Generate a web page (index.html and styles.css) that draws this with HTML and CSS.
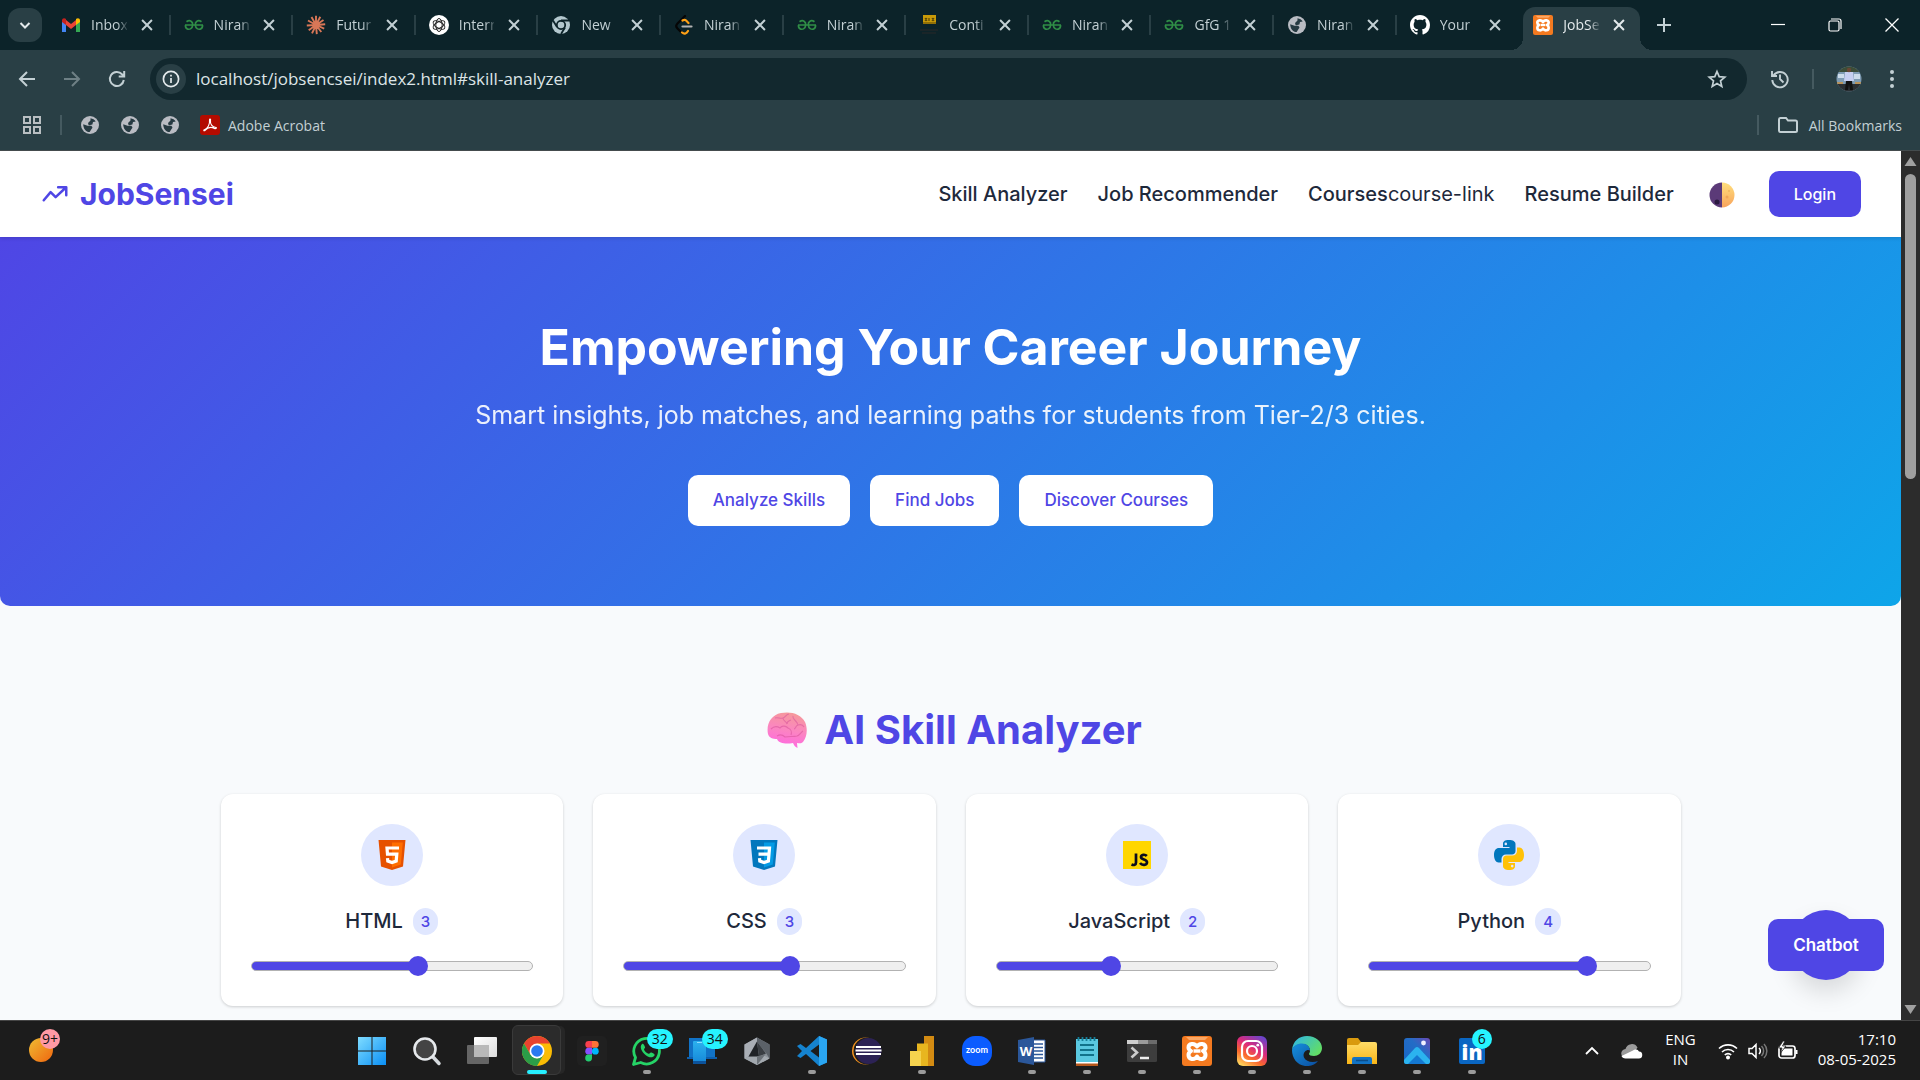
FILE: index.html
```html
<!DOCTYPE html>
<html lang="en">
<head>
<meta charset="utf-8">
<meta name="viewport" content="width=device-width, initial-scale=1">
<title>JobSensei</title>
<link rel="stylesheet" href="styles.css">
</head>
<body>
<svg class="sprite" aria-hidden="true">
  <defs>
    <linearGradient id="g-win" x1="0" y1="0" x2="1" y2="1"><stop offset="0" stop-color="#7fdcff"/><stop offset="1" stop-color="#0a8ff5"/></linearGradient>
    <linearGradient id="g-orange" x1="0" y1="0" x2="1" y2="1"><stop offset="0" stop-color="#eebc33"/><stop offset="1" stop-color="#f0660f"/></linearGradient>
    <linearGradient id="g-white" x1="0" y1="0" x2="1" y2="1"><stop offset="0" stop-color="#fff"/><stop offset="1" stop-color="#dcdcdc"/></linearGradient>
    <linearGradient id="g-phone" x1="0" y1="0" x2="0" y2="1"><stop offset="0" stop-color="#2cb2ee"/><stop offset="1" stop-color="#1586d8"/></linearGradient>
    <linearGradient id="g-insta" x1="0.2" y1="1" x2="0.8" y2="0"><stop offset="0" stop-color="#ffd45c"/><stop offset="0.3" stop-color="#fb6a2c"/><stop offset="0.6" stop-color="#dd2a7b"/><stop offset="1" stop-color="#6a45cc"/></linearGradient>
    <linearGradient id="g-edge" x1="0" y1="0" x2="1" y2="0.6"><stop offset="0" stop-color="#2bb4ee"/><stop offset="1" stop-color="#62dd66"/></linearGradient>
    <linearGradient id="g-edge2" x1="0" y1="0" x2="1" y2="1"><stop offset="0" stop-color="#1690dc"/><stop offset="1" stop-color="#0b4da0"/></linearGradient>
    <linearGradient id="g-folder" x1="0" y1="0" x2="0" y2="1"><stop offset="0" stop-color="#ffdc68"/><stop offset="1" stop-color="#f9b517"/></linearGradient>
    <linearGradient id="g-photos" x1="0" y1="1" x2="1" y2="0"><stop offset="0" stop-color="#1666c5"/><stop offset="0.6" stop-color="#246cc6"/><stop offset="1" stop-color="#6b49b5"/></linearGradient>
    <linearGradient id="g-brain" x1="0.7" y1="0" x2="0.5" y2="1"><stop offset="0" stop-color="#f59a98"/><stop offset="0.5" stop-color="#fb86c0"/><stop offset="1" stop-color="#ff68e2"/></linearGradient>
    <linearGradient id="g-moon" x1="0" y1="0" x2="0" y2="1"><stop offset="0" stop-color="#ffdf7c"/><stop offset="1" stop-color="#f8a35c"/></linearGradient>
    <symbol id="i-close" viewBox="0 0 12 12"><path d="M2.300 2.300l7.400 7.400M9.700 2.300l-7.400 7.400" fill="none" stroke="currentColor" stroke-width="1.500"/></symbol>
    <symbol id="i-gfg" viewBox="0 0 20 20"><g fill="none" stroke="#2f8d46" stroke-width="1.700"><path d="M1 10h18M2.500 6.800C6 4.300 9 6.500 8.700 10c-.3 3.600-3 4.600-5 4.100C1.800 13.600 1.300 12 1.500 10M17.500 6.800C14 4.300 11 6.500 11.300 10c.3 3.600 3 4.600 5 4.100 1.900-.5 2.400-2.100 2.200-4.100"/></g></symbol>
    <symbol id="i-globe" viewBox="0 0 20 20"><circle cx="10" cy="10" r="9" fill="#b9bcc3"/><path d="M10.500 3.200c2.300.3 4 1.500 5.200 3.400l-2.700.4-.6 2.600-3.300.6c-1.400-.8-1.200-2.300-.2-3.200 1-.8 1.800-.6 1.600-3.800zM3.200 9.200l4.300 1.500 3.700.1c1.800 1.200 1.400 2.400.3 3.200l-1.800 3.100c-3.700.1-6.400-3.500-6.500-7.900z" fill="#263a42"/></symbol>
    <symbol id="i-xampp" viewBox="0 0 30 30"><rect width="30" height="30" rx="3" fill="#f47a20"/><path d="M4 1h22l-3 3H7z" fill="#fba866"/><path d="M15 10.500C12.500 6.500 6.500 7.500 6.500 11.500c0 2 1.500 3 2.500 3.500-1 .5-2.500 1.500-2.500 4 0 4.500 6 5.500 8.500 1.500 2.500 4 8.500 3 8.500-1.500 0-2.500-1.500-3.500-2.500-4 1-.5 2.500-1.500 2.500-3.500 0-4-6-5-8.500-1z" fill="none" stroke="#fff" stroke-width="4" stroke-linejoin="round"/><path d="M11.500 15h7" stroke="#fff" stroke-width="3.500"/></symbol>
  </defs>
</svg>

<div class="screen">
  <header class="browser">
    <div class="tabstrip">
      <button class="tab-search" aria-label="Search tabs"><svg width="14" height="14" viewBox="0 0 14 14"><path d="M2.500 5l4.500 4.500L11.500 5" fill="none" stroke="currentColor" stroke-width="2"/></svg></button>
      <div class="tabs">
        <div class="tab"><svg class="favicon" viewBox="0 0 20 20"><path d="M1 5v12h4V9z" fill="#4285f4"/><path d="M19 5v12h-4V9z" fill="#34a853"/><path d="M5 5l5 4 5-4v5l-5 4-5-4z" fill="#ea4335"/><path d="M1 5.500C1 3 3.500 2.500 5 4v6L1 7z" fill="#c5221f"/><path d="M19 5.500C19 3 16.500 2.500 15 4v6l4-3z" fill="#fbbc04"/></svg><span class="tab-title">Inbox</span><button class="tab-close" aria-label="Close tab"><svg><use href="#i-close"/></svg></button></div>
        <div class="tab"><svg class="favicon"><use href="#i-gfg"/></svg><span class="tab-title">Niran</span><button class="tab-close" aria-label="Close tab"><svg><use href="#i-close"/></svg></button></div>
        <div class="tab"><svg class="favicon" viewBox="0 0 20 20"><path d="M10 10V.8M10 10l4.300-8.200M10 10l7.500-5M10 10l9.200-.8M10 10l8.200 3.700M10 10l5.300 7M10 10l.8 9.200M10 10l-4 8.300M10 10l-7.300 5.200M10 10L.8 10.500M10 10L2 5.500M10 10L5.500 2" stroke="#d97757" stroke-width="1.900"/></svg><span class="tab-title">Futur</span><button class="tab-close" aria-label="Close tab"><svg><use href="#i-close"/></svg></button></div>
        <div class="tab"><svg class="favicon" viewBox="0 0 20 20"><circle cx="10" cy="10" r="10" fill="#fff"/><g fill="none" stroke="#222" stroke-width="1"><ellipse cx="10" cy="10" rx="3.200" ry="6.500"/><ellipse cx="10" cy="10" rx="3.200" ry="6.500" transform="rotate(60 10 10)"/><ellipse cx="10" cy="10" rx="3.200" ry="6.500" transform="rotate(120 10 10)"/></g></svg><span class="tab-title">Intern</span><button class="tab-close" aria-label="Close tab"><svg><use href="#i-close"/></svg></button></div>
        <div class="tab"><svg class="favicon" viewBox="0 0 20 20"><circle cx="10" cy="10" r="9" fill="#b4c8ce"/><circle cx="10" cy="10" r="4.200" fill="none" stroke="#0d2329" stroke-width="1.800"/><path d="M10 5.500h8M6 12L2 5.500M14 12.500L10 19" stroke="#0d2329" stroke-width="1.800"/></svg><span class="tab-title">New</span><button class="tab-close" aria-label="Close tab"><svg><use href="#i-close"/></svg></button></div>
        <div class="tab"><svg class="favicon" viewBox="0 0 20 20"><path d="M11 1L3.500 8.500c-1.500 1.500-1.500 3.500 0 5L8 18" fill="none" stroke="#050505" stroke-width="2.200" stroke-linecap="round"/><path d="M8.500 5.500C11 4 12 5.500 14.500 8M8 17.500c2.500 2 4.500 1 6-1.500" fill="none" stroke="#ffa116" stroke-width="2.200" stroke-linecap="round"/><path d="M8.500 11.500h9" stroke="#b3b3b3" stroke-width="2.200" stroke-linecap="round"/></svg><span class="tab-title">Niran</span><button class="tab-close" aria-label="Close tab"><svg><use href="#i-close"/></svg></button></div>
        <div class="tab"><svg class="favicon"><use href="#i-gfg"/></svg><span class="tab-title">Niran</span><button class="tab-close" aria-label="Close tab"><svg><use href="#i-close"/></svg></button></div>
        <div class="tab"><svg class="favicon" viewBox="0 0 20 20"><rect x="4" y="0" width="13" height="9" fill="#c99a08"/><path d="M6 3l2 3m0-3L6 6m4-3v3m3-3l2 3m0-3l-2 3M4 8h13" stroke="#5a4706" stroke-width="1.200"/><path d="M1 15h18M3 18h14" stroke="#1a2528" stroke-width="2"/></svg><span class="tab-title">Conti</span><button class="tab-close" aria-label="Close tab"><svg><use href="#i-close"/></svg></button></div>
        <div class="tab"><svg class="favicon"><use href="#i-gfg"/></svg><span class="tab-title">Niran</span><button class="tab-close" aria-label="Close tab"><svg><use href="#i-close"/></svg></button></div>
        <div class="tab"><svg class="favicon"><use href="#i-gfg"/></svg><span class="tab-title">GfG 1</span><button class="tab-close" aria-label="Close tab"><svg><use href="#i-close"/></svg></button></div>
        <div class="tab"><svg class="favicon"><use href="#i-globe"/></svg><span class="tab-title">Niran</span><button class="tab-close" aria-label="Close tab"><svg><use href="#i-close"/></svg></button></div>
        <div class="tab"><svg class="favicon" viewBox="0 0 16 16"><path fill="#fff" d="M8 0C3.580 0 0 3.580 0 8c0 3.540 2.290 6.530 5.470 7.590.4.070.55-.17.55-.38 0-.19-.01-.82-.01-1.490-2.010.37-2.530-.49-2.690-.94-.09-.23-.48-.94-.82-1.130-.28-.15-.68-.52-.01-.53.63-.01 1.080.58 1.230.82.72 1.210 1.870.87 2.330.66.07-.52.28-.87.51-1.070-1.780-.2-3.640-.89-3.640-3.950 0-.87.31-1.590.82-2.150-.08-.2-.36-1.020.08-2.120 0 0 .67-.21 2.200.82.64-.18 1.320-.27 2-.27s1.360.09 2 .27c1.530-1.040 2.200-.82 2.200-.82.44 1.100.16 1.920.08 2.120.51.56.82 1.270.82 2.150 0 3.070-1.870 3.750-3.650 3.950.29.25.54.73.54 1.480 0 1.070-.01 1.930-.01 2.200 0 .21.15.46.55.38A8.010 8.010 0 0016 8c0-4.420-3.580-8-8-8z"/></svg><span class="tab-title">Your</span><button class="tab-close" aria-label="Close tab"><svg><use href="#i-close"/></svg></button></div>
        <div class="tab tab-active"><svg class="favicon"><use href="#i-xampp"/></svg><span class="tab-title">JobSe</span><button class="tab-close" aria-label="Close tab"><svg><use href="#i-close"/></svg></button></div>
      </div>
      <button class="new-tab" aria-label="New tab"><svg width="14" height="14" viewBox="0 0 14 14"><path d="M7 0v14M0 7h14" stroke="currentColor" stroke-width="2"/></svg></button>
      <div class="window-controls">
        <button aria-label="Minimize"><svg width="14" height="14" viewBox="0 0 14 14"><path d="M0 6.500h14" stroke="currentColor" stroke-width="1.200"/></svg></button>
        <button aria-label="Restore"><svg width="14" height="14" viewBox="0 0 14 14" fill="none" stroke="currentColor" stroke-width="1.200"><rect x="1" y="3" width="10" height="10" rx="1.500"/><path d="M3 1h8a2 2 0 012 2v8"/></svg></button>
        <button aria-label="Close"><svg width="14" height="14" viewBox="0 0 14 14"><path d="M.5.5l13 13M13.500.5l-13 13" stroke="currentColor" stroke-width="1.300"/></svg></button>
      </div>
    </div>
    <div class="toolbar">
      <div class="nav-buttons">
        <button aria-label="Back"><svg width="20" height="20" viewBox="0 0 20 20"><path d="M18 10H3M10 3l-7 7 7 7" fill="none" stroke="currentColor" stroke-width="2"/></svg></button>
        <button class="dim" aria-label="Forward"><svg width="20" height="20" viewBox="0 0 20 20"><path d="M2 10h15M10 3l7 7-7 7" fill="none" stroke="currentColor" stroke-width="2"/></svg></button>
        <button aria-label="Reload"><svg width="20" height="20" viewBox="0 0 20 20"><path d="M16.800 11A7 7 0 1115 5.200L17 7M17.200 2v5.500h-5.500" fill="none" stroke="currentColor" stroke-width="2"/></svg></button>
      </div>
      <div class="address">
        <span class="site-info"><svg width="18" height="18" viewBox="0 0 18 18"><circle cx="9" cy="9" r="7.600" fill="none" stroke="#e4eaec" stroke-width="1.700"/><path d="M9 8v5M9 4.800v1.800" stroke="#e4eaec" stroke-width="1.700"/></svg></span>
        <input type="text" aria-label="Address" value="localhost/jobsencsei/index2.html#skill-analyzer">
        <button aria-label="Bookmark this page"><svg width="20" height="20" viewBox="0 0 20 20"><path d="M10 2.500l2.200 5.200 5.600.5-4.300 3.700 1.300 5.500L10 14.500l-4.800 2.900 1.300-5.500-4.300-3.700 5.600-.5z" fill="none" stroke="currentColor" stroke-width="1.700"/></svg></button>
      </div>
      <div class="toolbar-end">
        <button aria-label="History"><svg width="20" height="20" viewBox="0 0 20 20" fill="none" stroke="currentColor" stroke-width="1.900"><path d="M3.500 6.500A7.700 7.700 0 112.300 11M2 2v5h5M10 5.500V10l3.500 3.500"/></svg></button>
        <span class="bar"></span>
        <button class="avatar" aria-label="Profile"><svg width="26" height="26" viewBox="0 0 26 26"><clipPath id="c-av"><circle cx="13" cy="13" r="12.500"/></clipPath><g clip-path="url(#c-av)"><path fill="#7f9cb3" d="M0 0h26v26H0z"/><path fill="#3c4d38" d="M0 0h26v6H0z"/><path fill="#cddcea" d="M2 8h6v4H2zM18 8h6v5h-6z"/><path fill="#2a2f33" d="M0 18h26v8H0z"/><path fill="#b8935b" d="M1 16h6v2H1zM19 16h6v2h-6z"/><path fill="#c7cff0" d="M9 6h8l1 9H8z"/><path fill="#111" d="M10 15h6l1 9h-3l-1-6-1 6H9z"/><circle cx="13" cy="4" r="2.200" fill="#6b4634"/></g></svg></button>
        <button aria-label="Menu"><svg width="6" height="22" viewBox="0 0 6 22" fill="currentColor"><circle cx="3" cy="4" r="2"/><circle cx="3" cy="11" r="2"/><circle cx="3" cy="18" r="2"/></svg></button>
      </div>
    </div>
    <nav class="bookmarks" aria-label="Bookmarks">
      <a class="apps" href="#apps" aria-label="Apps"><svg width="20" height="20" viewBox="0 0 20 20" fill="none" stroke="#b9bfc2" stroke-width="2"><path d="M2 2h6v6H2zM12 2h6v6h-6zM2 12h6v6H2zM12 12h6v6h-6z"/></svg></a>
      <span class="bar"></span>
      <a href="#b1" aria-label="Bookmark"><svg class="icon-20"><use href="#i-globe"/></svg></a>
      <a href="#b2" aria-label="Bookmark"><svg class="icon-20"><use href="#i-globe"/></svg></a>
      <a href="#b3" aria-label="Bookmark"><svg class="icon-20"><use href="#i-globe"/></svg></a>
      <a href="#acrobat"><svg class="icon-20" viewBox="0 0 20 20"><rect width="20" height="20" rx="3" fill="#b30b00"/><path d="M4 15c4-1.500 6-6 5.500-10 0-1.500 1.500-1 1 .5C10 9 12 12 16 12.500c1 .5 0 1.500-1.500 1C11 11.500 7.500 12.500 5 15.500c-1 .7-1.500 0-1-.5z" fill="none" stroke="#fff" stroke-width="1.100"/></svg>Adobe Acrobat</a>
      <span class="bar bar-end"></span>
      <a class="all" href="#all"><svg width="22" height="20" viewBox="0 0 22 20"><path d="M2 4.500A1.500 1.500 0 013.500 3H9l2 2.500h7.500A1.500 1.500 0 0120 7v8.500a1.500 1.500 0 01-1.500 1.500h-15A1.500 1.500 0 012 15.500z" fill="none" stroke="currentColor" stroke-width="2"/></svg>All Bookmarks</a>
    </nav>
  </header>

  <div class="viewport">
    <div class="page">
      <header class="site-header">
        <a class="brand" href="#home"><svg width="30" height="30" viewBox="0 0 24 24" fill="none" stroke="currentColor" stroke-width="2" stroke-linecap="round" stroke-linejoin="round"><path d="M3 17l5.500-6.500 4 4L20.500 7M14.500 6.500H21V13"/></svg>JobSensei</a>
        <nav class="site-nav" aria-label="Main">
          <a href="#skill-analyzer">Skill Analyzer</a>
          <a href="#jobs">Job Recommender</a>
          <span><a href="#courses">Courses</a>course-link</span>
          <a href="#resume">Resume Builder</a>
          <button class="theme" aria-label="Toggle theme"><svg width="26" height="26" viewBox="0 0 26 26"><path d="M13 .5a12.500 12.500 0 000 25z" fill="#5b3a78"/><path d="M13 .5a12.500 12.500 0 010 25z" fill="url(#g-moon)"/><circle cx="8" cy="20" r="2.500" fill="#2b1a40"/><circle cx="18" cy="15" r="1.500" fill="#efa657"/><circle cx="20" cy="9" r="1" fill="#efb55c"/></svg></button>
          <button class="btn btn-primary">Login</button>
        </nav>
      </header>

      <section class="hero">
        <h1>Empowering Your Career Journey</h1>
        <p>Smart insights, job matches, and learning paths for students from Tier-2/3 cities.</p>
        <div class="hero-actions">
          <button class="btn">Analyze Skills</button>
          <button class="btn">Find Jobs</button>
          <button class="btn">Discover Courses</button>
        </div>
      </section>

      <section class="analyzer" id="skill-analyzer">
        <h2><svg width="40" height="36" viewBox="0 0 40 36"><path d="M1 22C-1 12 4 3 14 1c10-2 20 1 24 9 3 7 2 15-2 20-2 2-4 1-6 1l.5 5C28 35 27 33 26 31c-6 1-14 1-16-4-4 0-8-1-9-5z" fill="url(#g-brain)"/><path d="M8 6c3-1 5 1 8 0s3-4 6-4M16 6c0 3 3 3 4 6M4 17c3-3 6-3 9-1 2-3 6-2 8 0 3 1 4 4 3 7M26 4c-1 4 4 4 5 9 3-1 5 0 6 2M31 13c-3 1-2 4-4 4M10 24c3-2 6-1 8 1 4-1 8 0 12-1 3-1 4-4 6-5M24 8c-2 1-4 1-4 4" fill="none" stroke="#d9579d" stroke-opacity=".6" stroke-width="1.100"/></svg>AI Skill Analyzer</h2>
        <div class="cards">
          <article class="card">
            <span class="disc"><svg width="30" height="30" viewBox="0 0 30 30"><path d="M1.500 0h27l-2.500 26.500L15 30 4 26.500z" fill="#e65100"/><path d="M15 2.500h10.800L23.800 24.500 15 27.500z" fill="#ff6d00"/><path d="M22 8H10l.5 6.200h9.300l-.6 6.800-4.200 1.500-4.200-1.500-.3-2.800" fill="none" stroke="#fff" stroke-width="3.200"/></svg></span>
            <div class="skill"><label for="s-html">HTML</label><span class="level">3</span></div>
            <input id="s-html" type="range" min="0" max="5" value="3" style="--fill: 0.6">
          </article>
          <article class="card">
            <span class="disc"><svg width="30" height="30" viewBox="0 0 30 30"><path d="M1.500 0h27l-2.500 26.500L15 30 4 26.500z" fill="#0277bd"/><path d="M15 2.500h10.800L23.800 24.500 15 27.500z" fill="#039be5"/><path d="M8 8h12.500l-.5 6.200H9.500M20 14.200l-.6 6.800-4.400 1.500-4.200-1.500-.3-2.800" fill="none" stroke="#fff" stroke-width="3.200"/></svg></span>
            <div class="skill"><label for="s-css">CSS</label><span class="level">3</span></div>
            <input id="s-css" type="range" min="0" max="5" value="3" style="--fill: 0.6">
          </article>
          <article class="card">
            <span class="disc"><svg width="30" height="30" viewBox="0 0 30 30"><path d="M1 1h28v28H1z" fill="#ffd600"/><path d="M14 13.500v9c0 2.500-2 3-4.500 2M24.800 16c-1.800-2-5.800-1.500-5.800 1 0 3 6 2 6 5.200 0 3.300-5 3.500-7 .8" fill="none" stroke="#0b0b1e" stroke-width="2.700"/></svg></span>
            <div class="skill"><label for="s-js">JavaScript</label><span class="level">2</span></div>
            <input id="s-js" type="range" min="0" max="5" value="2" style="--fill: 0.4">
          </article>
          <article class="card">
            <span class="disc"><svg width="30" height="30" viewBox="0 0 30 30"><path d="M15 0c-4.500 0-6 1.500-6 4v3h6.500v1H5C2 8 0 10.500 0 15s2 7.500 4.500 7.500H7.500V19c0-2.500 2-4.500 4.500-4.500h6c2 0 3.500-1.500 3.500-3.500V4c0-2.500-2.500-4-6.500-4z" fill="#0277bd"/><circle cx="11.800" cy="3.900" r="1.300" fill="#e0e7ff"/><path d="M15 30c4.500 0 6-1.500 6-4v-3h-6.500v-1H25c3 0 5-2.500 5-7s-2-7.500-4.500-7.500H23V11c0 2.500-2 4.500-4.500 4.500h-6c-2 0-3.500 1.500-3.500 3.500v7c0 2.500 2.500 4 6 4z" fill="#ffc107"/><circle cx="18.200" cy="26.100" r="1.300" fill="#e0e7ff"/></svg></span>
            <div class="skill"><label for="s-py">Python</label><span class="level">4</span></div>
            <input id="s-py" type="range" min="0" max="5" value="4" style="--fill: 0.8">
          </article>
        </div>
      </section>
      <div class="chat"><button class="btn btn-primary">Chatbot</button></div>
    </div>
    <div class="scrollbar" aria-hidden="true">
      <svg width="13" height="11" viewBox="0 0 13 11"><path d="M6.500 1L12.500 10H.5z" fill="#a0a0a0"/></svg>
      <div class="scroll-track"><div class="scroll-thumb"></div></div>
      <svg width="13" height="11" viewBox="0 0 13 11"><path d="M6.500 10L12.500 1H.5z" fill="#a0a0a0"/></svg>
    </div>
  </div>

  <footer class="taskbar">
    <div class="widgets"><span class="weather"><svg width="24" height="24" viewBox="0 0 24 24"><circle cx="12" cy="12" r="12" fill="url(#g-orange)"/></svg><span class="badge badge-pink">9+</span></span></div>
    <div class="apps-row">
      <button class="app" aria-label="Start"><svg viewBox="0 0 30 30"><path d="M1 1h13.500v13.500H1zM15.500 1H29v13.500H15.500zM1 15.500h13.500V29H1zM15.500 15.500H29V29H15.500z" fill="url(#g-win)"/></svg></button>
      <button class="app" aria-label="Search"><svg viewBox="0 0 30 30"><path d="M21 21l6 6.500" stroke="#d5d9dd" stroke-width="3.500" stroke-linecap="round"/><circle cx="13" cy="13" r="10.500" fill="#444" stroke="#e6e9ec" stroke-width="2.600"/></svg></button>
      <button class="app" aria-label="Task view"><svg viewBox="0 0 30 30"><rect x="0" y="9" width="22" height="19" rx="1" fill="#656565"/><rect x="7" y="1" width="23" height="20" rx="1" fill="url(#g-white)"/><path d="M7 9h15v12H7z" fill="#b9b9b9"/></svg></button>
      <button class="app app-active" aria-label="Chrome"><svg viewBox="0 0 30 30"><circle cx="15" cy="15" r="15" fill="#fbbc04"/><path d="M15 0A15 15 0 0128 7.500H15L8.500 18.700 2 7.500A15 15 0 0115 0z" fill="#e8432f"/><path d="M2 7.500A15 15 0 0015 30l6.500-11.200L15 22.500l-6.500-3.800z" fill="#2b9d48"/><circle cx="15" cy="15" r="7.500" fill="#fff"/><circle cx="15" cy="15" r="5.800" fill="#2a7af0"/></svg></button>
      <button class="app" aria-label="Figma"><svg viewBox="0 0 30 30"><rect width="30" height="30" rx="5" fill="#202020"/><path d="M15 5h-3.300a3.400 3.400 0 000 6.800H15z" fill="#f83f4d"/><path d="M15 5h3.300a3.400 3.400 0 010 6.800H15z" fill="#ff7237"/><path d="M15 11.800h-3.300a3.400 3.400 0 000 6.800H15z" fill="#874fff"/><circle cx="18.300" cy="15.200" r="3.400" fill="#00b6ff"/><path d="M11.700 18.600H15V22a3.400 3.400 0 11-3.300-3.400z" fill="#24cb71"/></svg></button>
      <button class="app running" aria-label="WhatsApp"><svg viewBox="0 0 30 30"><path d="M1.500 28.500l2-7A12.800 12.800 0 118.700 26.500z" fill="none" stroke="#25d366" stroke-width="2.800" stroke-linejoin="round"/><path d="M10 8c-3 3 0 8 3.500 11s7.500 3 9 .5c.5-1-.5-2-3-3-1.500-.5-2 1.500-3 1.300-2-.6-4-2.800-4.500-4.300 0-1 1.500-1.500 1-2.500C12.200 8.500 11 7 10 8z" fill="#25d366"/></svg><span class="badge">32</span></button>
      <button class="app" aria-label="Phone Link"><svg viewBox="0 0 30 30"><path d="M2 2h26v19H2z" fill="#1173c7"/><path d="M0 21h30v2H0z" fill="#0d5fae"/><rect x="6" y="5" width="13" height="23" rx="1" fill="url(#g-phone)"/><path d="M6 25h13v3H6z" fill="#0c539b"/><path d="M10 6.500h5" stroke="#8fdcff" stroke-width="1"/></svg><span class="badge">34</span></button>
      <button class="app" aria-label="AI Studio"><svg viewBox="0 0 30 30"><path d="M15 1.500l12.500 7v14L15 29 2.500 22.500v-14z" fill="#8a9097"/><path d="M15 1.500v4L6.500 20.500l-4 2v-14z" fill="#a9aeb5"/><path d="M15 1.500l12.500 7v14L24 17 15 5.500z" fill="#5b6168"/><path d="M2.500 22.500l4-2 15.500-1 5.500 3L15 29z" fill="#a2a8ae"/><path d="M15 5.500l2 15-10.500 0z" fill="#202327"/><path d="M15 5.500l9 12-7 3z" fill="#3a3e43"/><path d="M15 20.300l8.500-2L15 29z" fill="#6c7278"/></svg></button>
      <button class="app running" aria-label="Visual Studio Code"><svg viewBox="0 0 30 30"><path d="M22 0L9 12 3.500 8 0 10l5 5-5 5 3.500 2L9 18l13 12 8-3.500v-23zM22 8.500v13L13.500 15z" fill="#1583cf"/><path d="M22 0l8 3.500v23L22 30z" fill="#2aa6f2"/></svg></button>
      <button class="app" aria-label="Eclipse"><svg viewBox="0 0 30 30"><circle cx="13.500" cy="15" r="13.500" fill="#f7941e"/><circle cx="15" cy="15" r="13.500" fill="#1e1e1e"/><circle cx="16.500" cy="15" r="13" fill="#2c2255"/><path d="M4 11h25M3.500 14.500h26M4 18h25" stroke="#fff" stroke-width="2.200"/></svg></button>
      <button class="app running" aria-label="Power BI"><svg viewBox="0 0 30 30"><path d="M17 0h10v30H17z" fill="#d38b12"/><path d="M10 7.500h11V30H10z" fill="#e8b61f"/><path d="M3 15h11v15H3z" fill="#f5d34e"/></svg></button>
      <button class="app" aria-label="Zoom"><svg viewBox="0 0 30 30"><rect width="30" height="30" rx="13" fill="#0b5cff"/><text x="15" y="17" text-anchor="middle" font-family="Lato, sans-serif" font-size="9" font-weight="700" fill="#fff">zoom</text></svg></button>
      <button class="app running" aria-label="Word"><svg viewBox="0 0 30 30"><path d="M15 4h13v22H15z" fill="#fff" stroke="#2b579a" stroke-width="1"/><path d="M17 8h9M17 11.500h9M17 15h9M17 18.500h9M17 22h9" stroke="#2b579a" stroke-width="1.500"/><path d="M1 4l16-3v28L1 26z" fill="#2b579a"/><text x="9" y="20" text-anchor="middle" font-family="Open Sans, sans-serif" font-size="13" font-weight="700" fill="#fff">W</text></svg></button>
      <button class="app running" aria-label="Notepad"><svg viewBox="0 0 30 30"><path d="M4 26h22v4H4z" fill="#b4571c"/><path d="M4 3h22v23H4z" fill="#5ac8e0"/><path d="M4 26h22v1.500H4z" fill="#fff"/><path d="M8 9h14M8 14h14M8 19h14" stroke="#11728a" stroke-width="2"/><path d="M6.500 1v4M10.500 1v4M14.500 1v4M18.500 1v4M22.500 1v4" stroke="#167f99" stroke-width="1.800"/></svg></button>
      <button class="app running" aria-label="Terminal"><svg viewBox="0 0 30 30"><rect y="4" width="30" height="22" rx="1.500" fill="#3d3d3d"/><path d="M0 4h11v4H0z" fill="#cfcfcf"/><path d="M11 4h10v4H11z" fill="#9b9b9b"/><path d="M21 4h9v4h-9z" fill="#6b6b6b"/><path d="M4.500 11.500L10 16.500l-5.500 5" fill="none" stroke="#ccc" stroke-width="2.600"/><path d="M13 22h9" stroke="#eee" stroke-width="2.500"/></svg></button>
      <button class="app running" aria-label="XAMPP"><svg><use href="#i-xampp"/></svg></button>
      <button class="app running" aria-label="Instagram"><svg viewBox="0 0 30 30"><rect width="30" height="30" rx="6" fill="url(#g-insta)"/><g fill="none" stroke="#fff" stroke-width="2.200"><rect x="5" y="5" width="20" height="20" rx="6"/><circle cx="15" cy="15" r="5"/></g><circle cx="20.800" cy="9.200" r="1.400" fill="#fff"/></svg></button>
      <button class="app running" aria-label="Edge"><svg viewBox="0 0 30 30"><path d="M0 14C1 5 7 0 15 0c9 0 15 6 15 12 0 5-4 8-8 8-3 0-5-1-5-2 0-1 1-1 1-3.500C18 11 15 8 11 8 5 8 1 11 0 14z" fill="url(#g-edge)"/><path d="M0 14C1 10 5 7.500 10 7.500c5 0 8 3.500 8 7-3-2-8 2-6 7 2 4 8 6 14 3.500C23 29 18 30.500 13 30 5 29 0 22 0 14z" fill="url(#g-edge2)"/></svg></button>
      <button class="app running" aria-label="File Explorer"><svg viewBox="0 0 30 30"><path d="M0 4a2 2 0 012-2h9l3 4v6H0z" fill="#d99a0e"/><path d="M0 9h11l3-3h14a2 2 0 012 2v20H0z" fill="url(#g-folder)"/><path d="M5 28v-5a2 2 0 012-2h16a2 2 0 012 2v5z" fill="#1273c4"/><path d="M9 24.500h12" stroke="#0b4d8a" stroke-width="1.500"/></svg></button>
      <button class="app running" aria-label="Photos"><svg viewBox="0 0 30 30"><rect x="2" y="2" width="26" height="26" rx="3" fill="url(#g-photos)"/><path d="M2 24l11-12a3 3 0 014 0l11 12v2a2 2 0 01-2 2H4a2 2 0 01-2-2z" fill="#2bb3ef"/><path d="M15 19l9 9H6z" fill="#1478d2"/><circle cx="21.500" cy="7" r="2.400" fill="#f1f1ff"/></svg></button>
      <button class="app running" aria-label="LinkedIn"><svg viewBox="0 0 30 30"><rect x="2" y="2" width="26" height="26" rx="2" fill="#0a66c2"/><text x="15" y="24" text-anchor="middle" font-family="Open Sans, sans-serif" font-size="21" font-weight="800" fill="#fff">in</text></svg><span class="badge">6</span></button>
    </div>
    <div class="tray">
      <svg width="14" height="10" viewBox="0 0 14 10"><path d="M1 8l6-6 6 6" fill="none" stroke="#fff" stroke-width="1.800"/></svg>
      <svg class="tray-cloud" width="22" height="16" viewBox="0 0 22 16"><path d="M5 15a4.500 4.500 0 01-.5-9 6.500 6.500 0 0112-1.500L11 13z" fill="#9b9b9b"/><path d="M4.500 15.500c-2 0-3.500-1-4-2.500L12 7.500a4 4 0 016 1 3.500 3.500 0 01-.5 7z" fill="#fff"/></svg>
      <div class="lang">ENG<br>IN</div>
      <svg width="20" height="18" viewBox="0 0 20 18" fill="none" stroke="#fff" stroke-width="1.600"><path d="M1 6.500a13 13 0 0118 0M4 10a8.500 8.500 0 0112 0M6.800 13a4.500 4.500 0 016.400 0"/><circle cx="10" cy="15.500" r="1.200" fill="#fff"/></svg>
      <svg width="20" height="18" viewBox="0 0 20 18" fill="none" stroke="#fff" stroke-width="1.500"><path d="M1 6.500h3L8 2.500v13l-4-4H1zM11 6a4 4 0 010 6"/><path d="M13.500 4a7 7 0 010 10M16 2a10 10 0 010 14" stroke="#777"/></svg>
      <svg width="20" height="20" viewBox="0 0 20 20"><rect x="1" y="5" width="16" height="12" rx="2.500" fill="none" stroke="#fff" stroke-width="1.700"/><path d="M3.500 7.500h11v7h-11z" fill="#fff"/><path d="M18.500 9v4" stroke="#fff" stroke-width="2"/><path d="M5 0L.5 7H4L2.500 12 8 5H4.500L7 0z" fill="#fff" stroke="#1c1c1c" stroke-width=".8"/></svg>
      <div class="clock">17:10<br>08-05-2025</div>
    </div>
  </footer>
</div>
</body>
</html>
```
FILE: styles.css
```css
* { box-sizing: border-box; }

body {
  margin: 0;
  font-family: Inter, "Liberation Sans", sans-serif;
  color: #1e293b;
}

button {
  margin: 0;
  padding: 0;
  border: 0;
  background: none;
  font: inherit;
  color: inherit;
}

a { color: inherit; text-decoration: none; }

svg { display: block; flex: none; }

.sprite { position: absolute; width: 0; height: 0; }

.screen {
  display: flex;
  flex-direction: column;
  height: 100vh;
  overflow: hidden;
}

/* Browser frame */
.browser {
  flex: none;
  background: #293f45;
  border-bottom: 1px solid #444b4d;
  color: #c3d0d4;
  font-family: "Open Sans", "Noto Sans", sans-serif;
  font-size: 14px;
}

.tabstrip {
  display: flex;
  align-items: center;
  height: 50px;
  background: #0c2329;
}

.tab-search {
  display: grid;
  place-items: center;
  flex: none;
  width: 34px;
  height: 34px;
  margin: 0 6px 0 8px;
  border-radius: 12px;
  background: #293f45;
  color: #e4eaec;
}

.tabs { display: flex; flex: 1; height: 50px; min-width: 0; }

.tab {
  position: relative;
  display: flex;
  align-items: center;
  flex: 1 1 0;
  min-width: 0;
  padding: 0 16px 0 13px;
}

.tab:not(.tab-active)::after {
  content: "";
  position: absolute;
  right: 0;
  top: 15px;
  width: 2px;
  height: 20px;
  background: #293f45;
}

.tab:nth-last-child(2)::after { visibility: hidden; }

.favicon { width: 20px; height: 20px; }

.tab-title {
  flex: 1;
  min-width: 0;
  margin-left: 10px;
  overflow: hidden;
  white-space: nowrap;
  line-height: 24px;
  mask-image: linear-gradient(90deg, #000 26px, transparent 38px);
}

.tab-close { margin-left: 12px; padding: 4px 0; }
.tab-close svg { width: 16px; height: 16px; }

.tab-active {
  margin: 7px 4px 0;
  padding-left: 10px;
  padding-right: 13px;
  padding-bottom: 7px;
  border-radius: 12px 12px 0 0;
  background: #293f45;
  color: #e4eaec;
}

.tab-active::before,
.tab-active::after {
  content: "";
  position: absolute;
  bottom: 0;
  width: 12px;
  height: 12px;
}

.tab-active::before { left: -12px; background: radial-gradient(circle at 0 0, transparent 12px, #293f45 12px); }
.tab-active::after { right: -12px; background: radial-gradient(circle at 100% 0, transparent 12px, #293f45 12px); }

.new-tab {
  display: grid;
  place-items: center;
  flex: none;
  width: 40px;
  height: 34px;
  margin-right: 65px;
}

.window-controls { display: flex; flex: none; color: #fff; }

.window-controls button {
  display: grid;
  place-items: center;
  width: 57px;
  height: 50px;
}

.toolbar {
  display: flex;
  align-items: center;
  padding: 8px 25px 8px 17px;
}

.nav-buttons { display: flex; gap: 25px; width: 133px; }
.dim { opacity: 0.45; }

.address {
  display: flex;
  align-items: center;
  flex: 1;
  height: 42px;
  padding: 0 20px 0 6px;
  border-radius: 21px;
  background: #12282e;
}

.site-info {
  display: grid;
  place-items: center;
  width: 30px;
  height: 30px;
  border-radius: 15px;
  background: #293f45;
}

.address input {
  flex: 1;
  min-width: 0;
  padding: 0 10px;
  border: 0;
  outline: 0;
  background: none;
  color: #dde5e7;
  font: 17px/24px "Open Sans", "Noto Sans", sans-serif;
}

.toolbar-end {
  display: flex;
  align-items: center;
  gap: 22px;
  margin-left: 23px;
}

.avatar { margin-right: 5px; }

.bar { width: 2px; height: 20px; background: #455a60; }

.bookmarks {
  display: flex;
  align-items: center;
  gap: 20px;
  height: 42px;
  padding: 0 18px 8px 22px;
}

.bookmarks .bar { margin: 0 -2px; }
.bookmarks a { display: flex; align-items: center; gap: 8px; }
.bookmarks .bar-end { margin-left: auto; }
.bookmarks .all { gap: 10px; }
.icon-20 { width: 20px; height: 20px; }

/* Visible part of the scrolled document */
.viewport { display: flex; flex: 1; min-height: 0; overflow: hidden; }

.page {
  position: relative;
  flex: 1;
  min-width: 0;
  overflow: hidden;
  background: #f8fafc;
}

.scrollbar {
  display: flex;
  flex-direction: column;
  align-items: center;
  flex: none;
  width: 19px;
  padding: 5px 0;
  background: #2c2c2c;
}

.scroll-track { flex: 1; width: 11px; padding: 7px 0; }
.scroll-thumb { height: 37%; border-radius: 6px; background: #9f9f9f; }

.site-header {
  position: relative;
  display: flex;
  align-items: center;
  justify-content: space-between;
  padding: 20px 40px;
  background: #fff;
  box-shadow: 0 1px 4px rgba(0, 0, 0, 0.15);
}

.brand {
  display: flex;
  align-items: center;
  gap: 10px;
  color: #4f46e5;
  font-size: 30px;
  font-weight: 700;
  line-height: 36px;
}

.site-nav {
  display: flex;
  align-items: center;
  gap: 30px;
  font-size: 20px;
  line-height: 30px;
}

.site-nav a { font-weight: 500; }

.theme { padding: 4px 4px 2px 5px; }

.btn {
  padding: 12px 25px;
  border-radius: 10px;
  background: #fff;
  color: #4f46e5;
  font-size: 17px;
  font-weight: 500;
  line-height: 27px;
}

.btn-primary { background: #4f46e5; color: #fff; }
.site-nav .btn { padding: 10px 25px; font-size: 16px; line-height: 26px; }

.hero {
  padding: 80px 40px;
  border-radius: 0 0 10px 10px;
  background: linear-gradient(135deg, #4f46e5, #0ea5e9);
  color: #fff;
  text-align: center;
}

.hero h1 { margin: 0 0 20px; font-size: 50px; font-weight: 700; line-height: 60px; }
.hero p { margin: 0 0 42px; font-size: 25px; line-height: 36px; opacity: 0.9; }
.hero-actions { display: flex; justify-content: center; gap: 20px; }

.analyzer {
  max-width: 1500px;
  margin: 0 auto;
  padding: 100px 20px 80px;
}

.analyzer h2 {
  display: flex;
  align-items: center;
  justify-content: center;
  gap: 17px;
  margin: 0 0 40px;
  padding-left: 8px;
  color: #4f46e5;
  font-size: 40px;
  font-weight: 700;
  line-height: 48px;
}

.cards { display: grid; grid-template-columns: repeat(4, 1fr); gap: 30px; }

.card {
  display: flex;
  flex-direction: column;
  align-items: center;
  gap: 21px;
  padding: 30px;
  border-radius: 12px;
  background: #fff;
  box-shadow: 0 1px 3px rgba(0, 0, 0, 0.18);
}

.disc {
  display: grid;
  place-items: center;
  width: 62px;
  height: 62px;
  border-radius: 50%;
  background: #e0e7ff;
}

.skill {
  display: flex;
  align-items: center;
  gap: 10px;
  font-size: 20px;
  font-weight: 500;
  line-height: 28px;
}

.level {
  padding: 0 8px;
  border-radius: 14px;
  background: #e0e7ff;
  color: #4f46e5;
  font-size: 15px;
  line-height: 27px;
}

.card input {
  appearance: none;
  width: 100%;
  height: 20px;
  margin: 0;
  background: none;
}

.card input::-webkit-slider-runnable-track {
  height: 10px;
  border: 1px solid #b2b2b2;
  border-radius: 5px;
  background:
    linear-gradient(#4f46e5, #4f46e5) border-box 0 0 / calc(10px + (100% - 20px) * var(--fill)) 100% no-repeat,
    #efefef;
}

.card input::-webkit-slider-thumb {
  appearance: none;
  width: 20px;
  height: 20px;
  margin-top: -6px;
  border-radius: 50%;
  background: #4f46e5;
}

/* Floating action: round pad behind a wider button */
.chat {
  position: absolute;
  right: 40px;
  bottom: 40px;
  display: flex;
  align-items: center;
  justify-content: center;
  width: 70px;
  height: 70px;
  border-radius: 50%;
  background: #4f46e5;
  box-shadow: 0 12px 24px rgba(0, 0, 0, 0.13);
}

.chat .btn { flex: none; font-weight: 600; line-height: 28px; }

/* Taskbar */
.taskbar {
  display: grid;
  grid-template-columns: 9fr auto 11fr;
  flex: none;
  height: 60px;
  border-top: 1px solid #454545;
  background: #1c1c1c;
  color: #fff;
  font-family: "Open Sans", "Noto Sans", sans-serif;
  font-size: 15px;
  line-height: 20px;
}

.widgets { padding: 17px 29px; }
.weather { position: relative; display: block; width: 24px; }
.apps-row { display: flex; align-items: center; }

.app {
  position: relative;
  display: grid;
  place-items: center;
  width: 55px;
  height: 59px;
}

.app > svg { position: relative; width: 30px; height: 30px; }

.app-active::before {
  content: "";
  position: absolute;
  inset: 4px 3px 5px;
  border: 1px solid #3a3a3a;
  border-radius: 6px;
  background: #2b2b2b;
  box-shadow: 5px 0 0 -1px #262626;
}

.running::after,
.app-active::after {
  content: "";
  position: absolute;
  bottom: 6px;
  width: 8px;
  height: 4px;
  border-radius: 2px;
  background: #9b9b9b;
}

.app-active::after { width: 20px; background: #26efff; }

.badge {
  position: absolute;
  left: 50%;
  top: 8px;
  min-width: 20px;
  height: 20px;
  padding: 0 5px;
  border-radius: 10px;
  background: #26f4ff;
  color: #111;
  font-size: 14px;
  line-height: 20px;
  text-align: center;
}

.badge-pink { left: 11px; top: -9px; padding: 0; background: #ff99a4; }

.tray {
  display: flex;
  align-items: center;
  justify-content: flex-end;
  gap: 10px;
  padding-right: 24px;
}

.tray-cloud { margin: 0 12px; }
.lang, .clock { padding-bottom: 4px; }
.lang { margin-right: 12px; text-align: center; }
.clock { margin-left: 10px; text-align: right; }
```
